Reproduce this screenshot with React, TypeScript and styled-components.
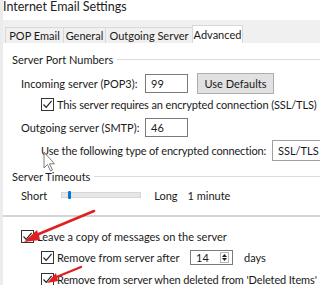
import React from "react";
import styled, { createGlobalStyle } from "styled-components";

const Global = createGlobalStyle`
  html, body { margin: 0; padding: 0; background: #fff; overflow: hidden; }
  body { font-family: Lato, "Noto Sans", sans-serif; color: #1a1a1a; }
`;

const Page = styled.div`
  position: relative;
  width: 320px;
  height: 285px;
  border-left: 3px solid #ececec;
  box-sizing: border-box;
  overflow: hidden;
  background: #fff;
`;

const Title = styled.div`
  height: 20px;
  font-size: 12.5px;
  line-height: 13px;
  color: #222;
`;

const TabBar = styled.div`
  height: 23px;
  background: #f0f0f0;
  display: flex;
  align-items: flex-end;
  padding-left: 3px;
`;

const Tab = styled.div<{ $active?: boolean; $w: number }>`
  width: ${(p) => p.$w}px;
  box-sizing: border-box;
  text-align: center;
  height: ${(p) => (p.$active ? 18 : 16)}px;
  font-size: 11px;
  line-height: ${(p) => (p.$active ? 17 : 16)}px;
  background: ${(p) => (p.$active ? "#fff" : "#f0f0f0")};
  border: 1px solid #d9d9d9;
  border-bottom: none;
  margin-left: -1px;
  color: #1a1a1a;
`;

const Content = styled.div`
  padding-top: 8px;
  display: flex;
  flex-direction: column;
`;

const GroupHeader = styled.div<{ $h: number; $mt?: number }>`
  height: ${(p) => p.$h}px;
  margin-top: ${(p) => p.$mt ?? 0}px;
  display: flex;
  align-items: center;
  padding-left: 9px;
  gap: 4px;
  font-size: 11px;
  &::after {
    content: "";
    flex: 1;
    height: 1px;
    background: #dcdcdc;
  }
`;

const Row = styled.div<{ $h: number; $indent: number; $mt?: number }>`
  height: ${(p) => p.$h}px;
  margin-top: ${(p) => p.$mt ?? 0}px;
  display: flex;
  align-items: center;
  padding-left: ${(p) => p.$indent}px;
  font-size: 11px;
  white-space: nowrap;
`;

const Label = styled.span<{ $w?: number; $ml?: number; $ls?: number }>`
  display: inline-block;
  width: ${(p) => (p.$w ? `${p.$w}px` : "auto")};
  margin-left: ${(p) => p.$ml ?? 0}px;
  letter-spacing: ${(p) => p.$ls ?? 0}px;
  flex-shrink: 0;
`;

const Input = styled.div<{ $w: number; $h?: number }>`
  width: ${(p) => p.$w}px;
  height: ${(p) => p.$h ?? 19}px;
  box-sizing: border-box;
  border: 1px solid #7a7a7a;
  background: #fff;
  padding-left: 5px;
  font-size: 11px;
  flex-shrink: 0;
  display: flex;
  align-items: center;
  justify-content: space-between;
`;

const Button = styled.div`
  margin-left: 9px;
  width: 77px;
  height: 21px;
  box-sizing: border-box;
  border: 1px solid #adadad;
  background: #e1e1e1;
  text-align: center;
  line-height: 19px;
  font-size: 11px;
  flex-shrink: 0;
`;

const Box = styled.div`
  width: 13px;
  height: 13px;
  box-sizing: border-box;
  border: 1px solid #333;
  background: #fff;
  margin-right: 3px;
  flex-shrink: 0;
  display: flex;
  align-items: center;
  justify-content: center;
`;

const Check = () => (
  <Box>
    <svg width="11" height="11" viewBox="0 0 11 11">
      <path d="M1.5 5.5 L4.2 8.3 L9.6 1.8" fill="none" stroke="#222" strokeWidth="1.2" />
    </svg>
  </Box>
);

const Select = styled.div`
  margin-left: auto;
  width: 48px;
  height: 21px;
  box-sizing: border-box;
  border: 1px solid #a0a0a0;
  border-right: none;
  background: #fff;
  padding-left: 5px;
  line-height: 19px;
  font-size: 11px;
  flex-shrink: 0;
`;

const Track = styled.div`
  position: relative;
  width: 78px;
  height: 4px;
  background: #e7e7e7;
  border: 1px solid #d6d6d6;
  margin: 0 13px 0 14px;
  flex-shrink: 0;
`;

const Thumb = styled.div`
  position: absolute;
  left: 6px;
  top: -2px;
  width: 3px;
  height: 8px;
  background: #0078d7;
  border-radius: 1px;
`;

const Separator = styled.div`
  height: 2px;
  background: #d4d4d4;
  margin-top: 11px;
`;

const Spin = styled.div`
  display: flex;
  flex-direction: column;
  justify-content: center;
  gap: 1px;
  width: 9px;
  height: 11px;
  box-sizing: border-box;
  border: 1px solid #b5b5b5;
  align-items: center;
  margin-right: 3px;
`;

const Overlay = styled.svg`
  position: absolute;
  left: -3px;
  top: 0;
  pointer-events: none;
`;

export default function App() {
  return (
    <>
      <Global />
      <Page>
        <Title>Internet Email Settings</Title>
        <TabBar>
          <Tab $w={59}>POP Email</Tab>
          <Tab $w={43}>General</Tab>
          <Tab $w={88}>Outgoing Server</Tab>
          <Tab $w={51} $active>Advanced</Tab>
        </TabBar>
        <Content>
          <GroupHeader $h={16}>Server Port Numbers</GroupHeader>
          <Row $h={21} $indent={18} $mt={6}>
            <Label $w={124}>Incoming server (POP3):</Label>
            <Input $w={43}>99</Input>
            <Button>Use Defaults</Button>
          </Row>
          <Row $h={15} $indent={38} $mt={3}>
            <Check />
            <Label $ls={-0.12}>This server requires an encrypted connection (SSL/TLS)</Label>
          </Row>
          <Row $h={20} $indent={18} $mt={5}>
            <Label $w={124}>Outgoing server (SMTP):</Label>
            <Input $w={43}>46</Input>
          </Row>
          <Row $h={21} $indent={38} $mt={3}>
            <Label $ls={-0.15}>Use the following type of encrypted connection:</Label>
            <Select>SSL/TLS</Select>
          </Row>
          <GroupHeader $h={20} $mt={5}>Server Timeouts</GroupHeader>
          <Row $h={18} $indent={18}>
            <Label>Short</Label>
            <Track>
              <Thumb />
            </Track>
            <Label>Long</Label>
            <Label $ml={10}>1 minute</Label>
          </Row>
          <Separator />
          <Row $h={15} $indent={18} $mt={12}>
            <Check />
            Leave a copy of messages on the server
          </Row>
          <Row $h={16} $indent={38} $mt={5}>
            <Check />
            <Label $w={133}>Remove from server after</Label>
            <Input $w={43} $h={15}>
              14
              <Spin>
                <svg width="5" height="3" viewBox="0 0 5 3"><path d="M0 3 L2.5 0 L5 3Z" fill="#222" /></svg>
                <svg width="5" height="3" viewBox="0 0 5 3"><path d="M0 0 L2.5 3 L5 0Z" fill="#222" /></svg>
              </Spin>
            </Input>
            <Label $ml={11}>days</Label>
          </Row>
          <Row $h={15} $indent={38} $mt={7}>
            <Check />
            <Label $ls={-0.12}>Remove from server when deleted from 'Deleted Items'</Label>
          </Row>
        </Content>
        <Overlay width="320" height="285" viewBox="0 0 320 285">
          <path d="M44 152 L44 168 L47.5 164.5 L50.5 171 L52.5 170 L49.5 163.8 L54.5 163.8 Z" fill="#fff" stroke="#555" strokeWidth="0.9" opacity="0.85" />
          <path d="M94 211 L34 236" stroke="#e02020" strokeWidth="2.6" strokeLinecap="round" />
          <path d="M24 242 L37 230 L40 240 Z" fill="#e02020" />
          <path d="M81 267 L54 278" stroke="#e02020" strokeWidth="2.4" strokeLinecap="round" />
          <path d="M47 283 L56 273 L58 281 Z" fill="#e02020" />
        </Overlay>
      </Page>
    </>
  );
}
